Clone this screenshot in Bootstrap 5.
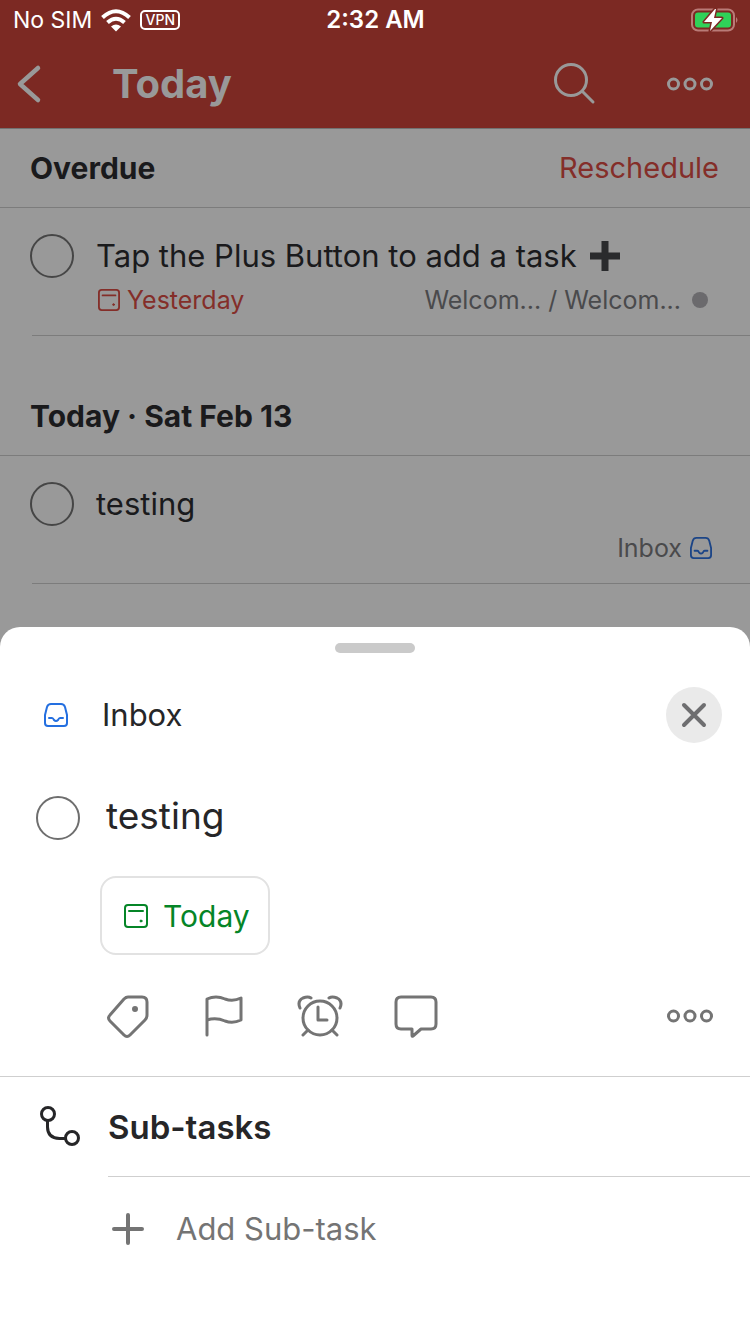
<!DOCTYPE html>
<html lang="en">
<head>
<meta charset="utf-8">
<meta name="viewport" content="width=device-width, initial-scale=1">
<title>Today</title>
<link href="https://cdn.jsdelivr.net/npm/bootstrap@5.3.0/dist/css/bootstrap.min.css" rel="stylesheet">
<script src="https://cdn.jsdelivr.net/npm/bootstrap@5.3.0/dist/js/bootstrap.bundle.min.js" defer></script>
<style>
  body { font-family: Inter, "Liberation Sans", sans-serif; background: #999; color: #1a1a1c; font-size: 31px; line-height: 40px; }
  svg { display: block; flex: none; fill: none; stroke: currentColor; stroke-linecap: round; stroke-linejoin: round; }
  .flat-ends { stroke-linecap: butt; }
  button { border: 0; background: none; padding: 0; color: inherit; }
  h1, h2, h3, p { margin: 0; }
  .app-top { background: #7c2923; border-bottom: 1px solid #727272; }
  .status-row { height: 40px; padding: 0 12px 0 13px; font-size: 23px; line-height: 24px; color: #fff; }
  .status-side { flex: 1 1 0; }
  .clock { font-size: 24px; font-weight: 600; }
  .vpn { border: 2px solid #fff; border-radius: 5px; height: 20px; width: 40px; font-size: 14px; line-height: 16px; font-weight: 500; text-align: center; }
  .title-row { height: 88px; padding: 0 36px 0 16px; color: #999; }
  .title-row h1 { font-size: 40px; line-height: 48px; font-weight: 700; margin-left: 70px; }
  .more-btn { margin-left: 69px; }
  .section-head { height: 79px; padding: 0 31px 0 30px; border-bottom: 1px solid #7c7c7c; }
  .section-head h2 { font-size: 30px; line-height: 40px; font-weight: 700; }
  .later { margin-top: 41px; }
  .red-text { color: #842e29; text-decoration: none; }
  .reschedule { font-size: 29px; }
  .task { margin-left: 32px; height: 128px; padding-top: 26px; border-bottom: 1px solid #7c7c7c; gap: 22px; }
  .task > input { margin-left: -2px; }
  .tick { appearance: none; flex: none; width: 44px; height: 44px; margin: 0; border: 2px solid #464646; border-radius: 50%; }
  .task-body { padding-right: 38px; min-width: 0; }
  .task-name { line-height: 44px; gap: 12px; }
  .meta { font-size: 25px; line-height: 44px; }
  .due { gap: 7px; padding-left: 2px; }
  .quiet { color: #4a4a4c; }
  .dot { width: 16px; height: 16px; border-radius: 50%; background: #6b6a6d; margin: 0 4px 0 11px; }
  .inbox-blue { color: #1c4587; }
  .sheet { background: #fff; color: #262628; margin-top: 43px; border-radius: 20px 20px 0 0; padding-top: 16px; }
  .handle { width: 80px; height: 10px; border-radius: 5px; background: #cacaca; }
  .project-row { margin-top: 34px; padding: 0 28px 0 44px; height: 56px; }
  .project-row button { width: 56px; height: 56px; border-radius: 50%; background: #eaeaea; color: #6e6e70; }
  .project-row .tray-icon { color: #246fe0; }
  .project-name { margin-left: 34px; }
  .detail-row { margin-top: 53px; padding: 0 36px; gap: 26px; height: 44px; }
  .detail-row .tick { border-color: #6e6e6e; }
  .detail-row label { font-size: 37px; line-height: 40px; }
  .chip { margin: 36px 0 0 100px; height: 79px; padding: 0 18px 0 21px; gap: 14px; border: 2px solid #e2e2e2; border-radius: 16px; color: #058527; font-size: 30px; }
  .tools { height: 122px; padding: 0 36px 0 104px; border-bottom: 1px solid #cfcfcf; color: #747474; }
  .tool-set { gap: 48px; }
  .sub-head { height: 99px; padding-left: 36px; gap: 24px; }
  .sub-head h3 { font-size: 33px; line-height: 40px; font-weight: 600; }
  .add-row { margin-left: 108px; border-top: 1px solid #cfcfcf; height: 105px; color: #747474; }
  .add-row button { gap: 30px; }
</style>
</head>
<body class="d-flex flex-column min-vh-100">
<svg class="d-none" aria-hidden="true">
  <symbol id="calendar" viewBox="0 0 24 24"><rect x="1" y="1" width="22" height="22" rx="3"/><path d="M5 7h14"/><circle cx="17" cy="17" r="1" fill="currentColor" stroke-width="1"/></symbol>
  <symbol id="tray" viewBox="0 0 24 24"><path d="M7 1h10q3 0 4 3l2 8v8q0 3-3 3H4q-3 0-3-3v-8l2-8q1-3 4-3zM5 15h3q1 0 2 2 2 2 4 0 1-2 2-2h3"/></symbol>
  <symbol id="more" viewBox="0 0 48 16"><circle cx="7.500" cy="8" r="5"/><circle cx="24" cy="8" r="5"/><circle cx="40.500" cy="8" r="5"/></symbol>
</svg>

<header class="app-top">
  <div class="status-row d-flex align-items-center">
    <div class="status-side d-flex align-items-center">
      <span>No SIM</span>
      <svg class="flat-ends ms-2 me-2" width="32" height="24" viewBox="0 0 32 24" stroke-width="4"><path d="M2.500 9.500Q16-3 29.500 9.500M7.500 14.500Q16 7 24.500 14.500"/><path d="M11 18.500q5-4 10 0L16 23.500z" fill="currentColor" stroke="none"/></svg>
      <span class="vpn">VPN</span>
    </div>
    <span class="clock">2:32 AM</span>
    <div class="status-side d-flex justify-content-end">
      <svg width="48" height="24" viewBox="0 0 48 24"><rect x="2" y="1.500" width="42" height="21" rx="6" stroke="#b97b77" stroke-width="2"/><path d="M46 9q3 3 0 6z" fill="#b97b77" stroke="none"/><rect x="5" y="4.500" width="36" height="15" rx="3" fill="#30d158" stroke="none"/><path d="M25 1L14 14h8l-2 9 12-13h-8l2-9z" fill="#fff" stroke="#7c2923" stroke-width="3" paint-order="stroke"/></svg>
    </div>
  </div>
  <div class="title-row d-flex align-items-center">
    <button type="button" aria-label="Back"><svg width="26" height="40" viewBox="0 0 26 40" stroke-width="4.500"><path d="M22 4L4 20l18 16"/></svg></button>
    <h1>Today</h1>
    <button type="button" class="ms-auto" aria-label="Search"><svg width="44" height="44" viewBox="0 0 44 44" stroke-width="3"><circle cx="18" cy="18" r="15.500"/><path d="M29.500 29.500L40 40"/></svg></button>
    <button type="button" class="more-btn" aria-label="More"><svg width="48" height="16" stroke-width="3"><use href="#more"/></svg></button>
  </div>
</header>

<main>
  <section>
    <div class="section-head d-flex align-items-center justify-content-between">
      <h2>Overdue</h2>
      <a href="#" class="red-text reschedule">Reschedule</a>
    </div>
    <div class="task d-flex">
      <input type="checkbox" class="tick" id="t1">
      <div class="task-body flex-grow-1">
        <label for="t1" class="task-name d-flex align-items-center">Tap the Plus Button to add a task
          <svg class="flat-ends" width="32" height="32" viewBox="0 0 32 32" stroke="#303133"><path d="M1 16h30M16 1v30" stroke="#2a2b2d" stroke-width="7"/></svg></label>
        <div class="meta d-flex align-items-center">
          <span class="due red-text d-flex align-items-center"><svg width="22" height="22" stroke-width="2"><use href="#calendar"/></svg>Yesterday</span>
          <span class="quiet ms-auto">Welcom... / Welcom...</span>
          <span class="dot"></span>
        </div>
      </div>
    </div>
  </section>
  <section class="later">
    <div class="section-head d-flex align-items-center"><h2>Today · Sat Feb 13</h2></div>
    <div class="task d-flex">
      <input type="checkbox" class="tick" id="t2">
      <div class="task-body flex-grow-1">
        <label for="t2" class="task-name d-block">testing</label>
        <div class="meta d-flex align-items-center justify-content-end">
          <span class="quiet me-2">Inbox</span>
          <svg class="inbox-blue" width="22" height="22" stroke-width="2"><use href="#tray"/></svg>
        </div>
      </div>
    </div>
  </section>
</main>

<section class="sheet flex-grow-1" aria-label="Task details">
  <div class="handle mx-auto"></div>
  <div class="project-row d-flex align-items-center">
    <svg class="tray-icon" width="24" height="24" stroke-width="2"><use href="#tray"/></svg>
    <span class="project-name">Inbox</span>
    <button type="button" class="ms-auto d-flex align-items-center justify-content-center" aria-label="Close"><svg width="28" height="28" viewBox="0 0 28 28" stroke-width="4"><path d="M4 4l20 20M24 4L4 24"/></svg></button>
  </div>
  <div class="detail-row d-flex">
    <input type="checkbox" class="tick" id="t3">
    <label for="t3">testing</label>
  </div>
  <button type="button" class="chip d-flex align-items-center"><svg width="26" height="26" viewBox="0 0 26 26" stroke-width="2"><use href="#calendar" x="1" y="1" width="24" height="24"/></svg>Today</button>
  <div class="tools d-flex align-items-center justify-content-between">
    <div class="tool-set d-flex">
      <button type="button" aria-label="Labels"><svg width="48" height="48" viewBox="0 0 48 48" stroke-width="3"><path d="M24 5h14q5 0 5 5v13q0 3-2 5L26 43q-3 3-6 0L6 29q-3-3 0-6L20 7q2-2 4-2z"/><circle cx="31" cy="17" r="2" fill="currentColor" stroke-width="2"/></svg></button>
      <button type="button" aria-label="Priority"><svg width="48" height="48" viewBox="0 0 48 48" stroke-width="3"><path d="M7 43V7q9-4 18 0 8 3 16-1v22q-8 4-16 1-9-4-18-1"/></svg></button>
      <button type="button" aria-label="Reminders"><svg width="48" height="48" viewBox="0 0 48 48" stroke-width="3"><circle cx="24" cy="26" r="17"/><path d="M22 15v13h9M12 38l-5 5M36 38l5 5M4 16Q1 9 7 6q5-2 8 0M44 16q3-7-3-10-5-2-8 0"/></svg></button>
      <button type="button" aria-label="Comments"><svg width="48" height="48" viewBox="0 0 48 48" stroke-width="3"><path d="M9 5h30q5 0 5 5v22q0 5-5 5H29l-8 7q-1 1-1-1v-6H9q-5 0-5-5V10q0-5 5-5z"/></svg></button>
    </div>
    <button type="button" aria-label="More"><svg width="48" height="16" stroke-width="3"><use href="#more"/></svg></button>
  </div>
  <div class="sub-head d-flex align-items-center">
    <svg width="48" height="48" viewBox="0 0 48 48" stroke-width="3"><circle cx="12" cy="11" r="6.500"/><circle cx="36" cy="35" r="6.500"/><path d="M11.500 18v6q0 11 12 11.500h6"/></svg>
    <h3>Sub-tasks</h3>
  </div>
  <div class="add-row d-flex align-items-center">
    <button type="button" class="d-flex align-items-center"><svg width="38" height="38" viewBox="0 0 38 38" stroke-width="4"><path d="M6 19h28M20 5v28"/></svg>Add Sub-task</button>
  </div>
</section>
</body>
</html>
